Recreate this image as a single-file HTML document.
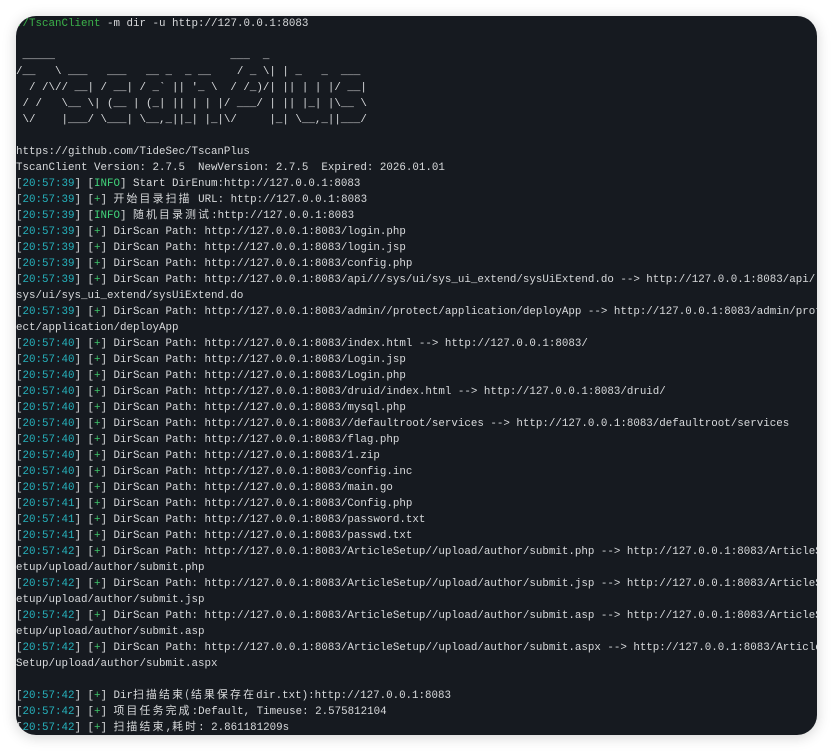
<!DOCTYPE html>
<html><head><meta charset="utf-8"><style>
html,body{margin:0;padding:0;background:#fff;width:833px;height:752px;overflow:hidden}
.t{position:absolute;left:16px;top:16px;width:801px;height:719px;background:#161a20;border-radius:20px;overflow:hidden;box-shadow:0 2px 14px rgba(0,0,0,.18)}
pre{margin:0;position:absolute;left:0;top:0px;font-family:"Liberation Mono",monospace;font-size:10.83px;line-height:16px;color:#d8dadc;white-space:pre}
.g{color:#3cb24a}.c{color:#26b2bd}.i{color:#41d37a}.p{color:#3fc56a}
.z{letter-spacing:2.2px;font-family:"Noto Sans CJK SC",sans-serif;line-height:0}
</style></head><body><div class="t"><pre><span class="g">./TscanClient</span> -m dir -u http://127.0.0.1:8083

 _____                           ___  _
/__   \ ___   ___   __ _  _ __    / _ \| | _   _  ___
  / /\// __| / __| / _` || '_ \  / /_)/| || | | |/ __|
 / /   \__ \| (__ | (_| || | | |/ ___/ | || |_| |\__ \
 \/    |___/ \___| \__,_||_| |_|\/     |_| \__,_||___/

https://github.com/TideSec/TscanPlus
TscanClient Version: 2.7.5  NewVersion: 2.7.5  Expired: 2026.01.01
[<span class="c">20:57:39</span>] [<span class="i">INFO</span>] Start DirEnum:http://127.0.0.1:8083
[<span class="c">20:57:39</span>] [<span class="p">+</span>] <span class="z">开始目录扫描</span> URL: http://127.0.0.1:8083
[<span class="c">20:57:39</span>] [<span class="i">INFO</span>] <span class="z">随机目录测试</span>:http://127.0.0.1:8083
[<span class="c">20:57:39</span>] [<span class="p">+</span>] DirScan Path: http://127.0.0.1:8083/login.php
[<span class="c">20:57:39</span>] [<span class="p">+</span>] DirScan Path: http://127.0.0.1:8083/login.jsp
[<span class="c">20:57:39</span>] [<span class="p">+</span>] DirScan Path: http://127.0.0.1:8083/config.php
[<span class="c">20:57:39</span>] [<span class="p">+</span>] DirScan Path: http://127.0.0.1:8083/api///sys/ui/sys_ui_extend/sysUiExtend.do --> http://127.0.0.1:8083/api/
sys/ui/sys_ui_extend/sysUiExtend.do
[<span class="c">20:57:39</span>] [<span class="p">+</span>] DirScan Path: http://127.0.0.1:8083/admin//protect/application/deployApp --> http://127.0.0.1:8083/admin/prote
ect/application/deployApp
[<span class="c">20:57:40</span>] [<span class="p">+</span>] DirScan Path: http://127.0.0.1:8083/index.html --> http://127.0.0.1:8083/
[<span class="c">20:57:40</span>] [<span class="p">+</span>] DirScan Path: http://127.0.0.1:8083/Login.jsp
[<span class="c">20:57:40</span>] [<span class="p">+</span>] DirScan Path: http://127.0.0.1:8083/Login.php
[<span class="c">20:57:40</span>] [<span class="p">+</span>] DirScan Path: http://127.0.0.1:8083/druid/index.html --> http://127.0.0.1:8083/druid/
[<span class="c">20:57:40</span>] [<span class="p">+</span>] DirScan Path: http://127.0.0.1:8083/mysql.php
[<span class="c">20:57:40</span>] [<span class="p">+</span>] DirScan Path: http://127.0.0.1:8083//defaultroot/services --> http://127.0.0.1:8083/defaultroot/services
[<span class="c">20:57:40</span>] [<span class="p">+</span>] DirScan Path: http://127.0.0.1:8083/flag.php
[<span class="c">20:57:40</span>] [<span class="p">+</span>] DirScan Path: http://127.0.0.1:8083/1.zip
[<span class="c">20:57:40</span>] [<span class="p">+</span>] DirScan Path: http://127.0.0.1:8083/config.inc
[<span class="c">20:57:40</span>] [<span class="p">+</span>] DirScan Path: http://127.0.0.1:8083/main.go
[<span class="c">20:57:41</span>] [<span class="p">+</span>] DirScan Path: http://127.0.0.1:8083/Config.php
[<span class="c">20:57:41</span>] [<span class="p">+</span>] DirScan Path: http://127.0.0.1:8083/password.txt
[<span class="c">20:57:41</span>] [<span class="p">+</span>] DirScan Path: http://127.0.0.1:8083/passwd.txt
[<span class="c">20:57:42</span>] [<span class="p">+</span>] DirScan Path: http://127.0.0.1:8083/ArticleSetup//upload/author/submit.php --> http://127.0.0.1:8083/ArticleS
etup/upload/author/submit.php
[<span class="c">20:57:42</span>] [<span class="p">+</span>] DirScan Path: http://127.0.0.1:8083/ArticleSetup//upload/author/submit.jsp --> http://127.0.0.1:8083/ArticleS
etup/upload/author/submit.jsp
[<span class="c">20:57:42</span>] [<span class="p">+</span>] DirScan Path: http://127.0.0.1:8083/ArticleSetup//upload/author/submit.asp --> http://127.0.0.1:8083/ArticleS
etup/upload/author/submit.asp
[<span class="c">20:57:42</span>] [<span class="p">+</span>] DirScan Path: http://127.0.0.1:8083/ArticleSetup//upload/author/submit.aspx --> http://127.0.0.1:8083/Article
Setup/upload/author/submit.aspx

[<span class="c">20:57:42</span>] [<span class="p">+</span>] Dir<span class="z">扫描结束(结果保存在</span>dir.txt):http://127.0.0.1:8083
[<span class="c">20:57:42</span>] [<span class="p">+</span>] <span class="z">项目任务完成</span>:Default, Timeuse: 2.575812104
[<span class="c">20:57:42</span>] [<span class="p">+</span>] <span class="z">扫描结束</span>,<span class="z">耗时</span>: 2.861181209s</pre></div></body></html>
